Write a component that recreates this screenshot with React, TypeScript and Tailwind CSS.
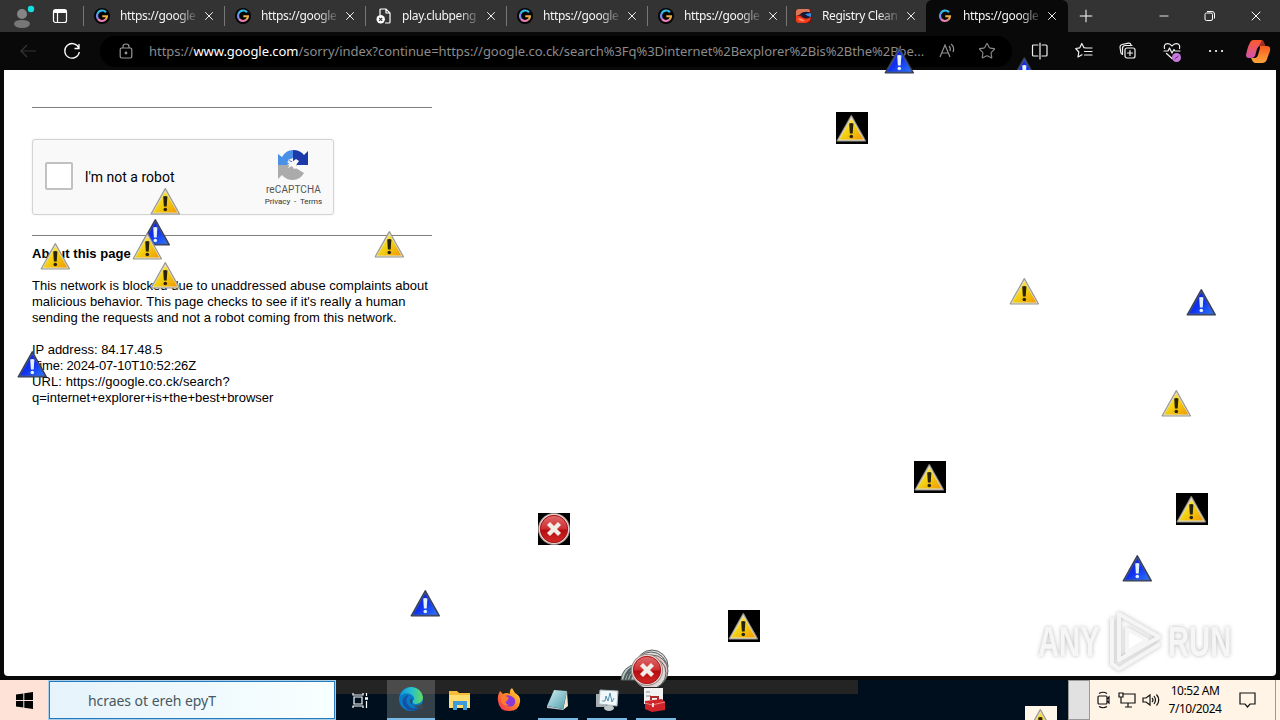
import type { ReactNode } from "react";
import { Minus, Plus, Star, X } from "lucide-react";

type Pin = { x: number; y: number; kind: "yellow" | "blue"; boxed?: boolean; h?: number };

const pins: Pin[] = [
  { x: 139, y: 216, kind: "blue" },
  { x: 149, y: 185, kind: "yellow" },
  { x: 131, y: 230, kind: "yellow" },
  { x: 373, y: 228, kind: "yellow" },
  { x: 39, y: 240, kind: "yellow" },
  { x: 149, y: 259, kind: "yellow" },
  { x: 16, y: 348, kind: "blue" },
  { x: 409, y: 587, kind: "blue" },
  { x: 883, y: 44, kind: "blue" },
  { x: 1008, y: 54, kind: "blue", h: 16 },
  { x: 836, y: 112, kind: "yellow", boxed: true },
  { x: 1008, y: 275, kind: "yellow" },
  { x: 1185, y: 286, kind: "blue" },
  { x: 1160, y: 387, kind: "yellow" },
  { x: 914, y: 461, kind: "yellow", boxed: true },
  { x: 1176, y: 493, kind: "yellow", boxed: true },
  { x: 1121, y: 552, kind: "blue" },
  { x: 728, y: 610, kind: "yellow", boxed: true },
];

const tabs = [
  { title: "https://google", icon: "google" },
  { title: "https://google", icon: "google" },
  { title: "play.clubpeng", icon: "file" },
  { title: "https://google", icon: "google" },
  { title: "https://google", icon: "google" },
  { title: "Registry Clean", icon: "registry" },
  { title: "https://google", icon: "google", active: true },
];

export default function App() {
  return (
    <div className="relative flex h-[720px] w-[1280px] flex-col overflow-hidden bg-[#090909] font-['Noto_Sans',sans-serif]">
      <Defs />
      <TabBar />
      <Toolbar />
      <main className="mx-1 h-[606px] rounded-b bg-white pl-7 pt-[37px] font-['Liberation_Sans',sans-serif] text-black">
        <Captcha />
      </main>
      <div className="h-1 shrink-0 bg-[#090909]" />
      <Taskbar />
      <Watermark />
      {pins.map((pin) => (
        <div
          key={`${pin.x}-${pin.y}`}
          className={`absolute w-8 overflow-hidden ${pin.boxed ? "bg-black" : ""}`}
          style={{ left: pin.x, top: pin.y, height: pin.h ?? 32 }}
        >
          <Triangle kind={pin.kind} shift={pin.boxed ? -0.5 : 0.5} />
        </div>
      ))}
      <div className="absolute left-[538px] top-[513px] size-8 bg-black">
        <ErrorIcon />
      </div>
      <ErrorTrail />
      <div className="absolute left-[1025px] top-[706px] h-[14px] w-8 overflow-hidden bg-[#fff6ea]">
        <Triangle kind="yellow" shift={-0.5} />
      </div>
    </div>
  );
}

function Defs() {
  return (
    <svg className="absolute size-0">
      <defs>
        <linearGradient id="yellow" x1="0" y1="0" x2="1" y2="1">
          <stop offset="0" stopColor="#fff36a" />
          <stop offset=".5" stopColor="#f3d010" />
          <stop offset="1" stopColor="#f29a00" />
        </linearGradient>
        <linearGradient id="blue" x1="0" y1="0" x2="1" y2="1">
          <stop offset="0" stopColor="#1b22c4" />
          <stop offset=".5" stopColor="#1030f0" />
          <stop offset="1" stopColor="#2b73ff" />
        </linearGradient>
        <linearGradient id="red" x1="0" y1="0" x2="0" y2="1">
          <stop offset="0" stopColor="#df6b6b" />
          <stop offset=".48" stopColor="#cf3034" />
          <stop offset=".55" stopColor="#b50c12" />
          <stop offset="1" stopColor="#d42b28" />
        </linearGradient>
        <linearGradient id="edge" x1="0" y1="0" x2="1" y2="0">
          <stop offset="0" stopColor="#1596d8" />
          <stop offset=".5" stopColor="#28bfcf" />
          <stop offset="1" stopColor="#65dc58" />
        </linearGradient>
        <linearGradient id="pad" x1="0" y1="0" x2="1" y2="1">
          <stop offset="0" stopColor="#d2f0f2" />
          <stop offset="1" stopColor="#4e9dad" />
        </linearGradient>
        <linearGradient id="fox" x1="1" y1="0" x2="0" y2="1">
          <stop offset="0" stopColor="#ffe445" />
          <stop offset=".45" stopColor="#ff8b22" />
          <stop offset="1" stopColor="#ef245f" />
        </linearGradient>
        <linearGradient id="copilotA" x1="0" y1="0" x2="0" y2="1">
          <stop offset="0" stopColor="#ff5a28" />
          <stop offset="1" stopColor="#d154b2" />
        </linearGradient>
        <linearGradient id="copilotB" x1="0" y1="0" x2="0" y2="1">
          <stop offset="0" stopColor="#f45b1f" />
          <stop offset="1" stopColor="#ffa53c" />
        </linearGradient>
      </defs>
    </svg>
  );
}

function Triangle({ kind, shift }: { kind: "yellow" | "blue"; shift: number }) {
  const blue = kind === "blue";
  return (
    <svg width="32" height="32" viewBox="0 0 32 32">
      <g transform={`translate(${shift} 0)`}>
        <path
          d="M15 3.8Q15.8 2.4 16.6 3.8L30.3 28.2Q30.9 29.4 29.6 29.4H2Q.7 29.4 1.3 28.2Z"
          fill={blue ? "#343a50" : "#99968a"}
        />
        <path d="M15.8 4.8L29.1 28.4H2.5Z" fill={blue ? "#43598c" : "#e4dfcc"} />
        <path d="M15.8 6.6L27.8 27.4H3.8Z" fill={blue ? "url(#blue)" : "url(#yellow)"} />
        <path d="M13.7 11.6Q15.8 10.6 17.9 11.6L17.2 21.5H14.4Z" fill={blue ? "#e4f1ff" : "#28220b"} />
        <circle cx="15.8" cy="24.5" r="1.8" fill={blue ? "#e4f1ff" : "#28220b"} />
      </g>
    </svg>
  );
}

function ErrorIcon() {
  return (
    <svg width="32" height="32" viewBox="0 0 32 32">
      <circle cx="16" cy="16" r="16" fill="#9d8c89" />
      <circle cx="16" cy="16" r="15" fill="#f2e3e1" />
      <circle cx="16" cy="16" r="13.7" fill="url(#red)" stroke="#a41518" />
      <path d="M10.5 10.5L21.5 21.5M21.5 10.5L10.5 21.5" stroke="#f0eee6" strokeWidth="4.3" />
    </svg>
  );
}

function ErrorTrail() {
  return (
    <div className="absolute left-[620px] top-[646px] h-[41px] w-[52px] overflow-hidden">
      <svg className="absolute left-0 top-0" width="52" height="42" viewBox="0 0 52 42">
        <g stroke="#52605f" strokeWidth="1">
          <path d="M1 34Q2 21 16 18V34Z" fill="#b5c7c3" />
          <path d="M4 34Q6 23 18 19M7 34Q8 25 19 21M10 34Q11 27 20 23" fill="none" strokeWidth="2" />
          <circle cx="32" cy="20" r="16" fill="#e7dddd" />
          <circle cx="31" cy="22" r="16" fill="#e7dddd" />
          <circle cx="32" cy="25" r="16" fill="#edc7c5" />
          <circle cx="30" cy="27" r="16" fill="#dfd7d5" />
        </g>
      </svg>
      <div className="absolute left-[11px] top-[8px]">
        <ErrorIcon />
      </div>
    </div>
  );
}

function GoogleIcon({ active }: { active?: boolean }) {
  return (
    <svg width="16" height="16" viewBox="0 0 16 16" className="shrink-0">
      {!active && <circle cx="8" cy="8" r="8" fill="#050505" />}
      <path d="M12 4.3A5 5 0 0 0 3.5 5.8" fill="none" stroke="#33b8e8" strokeWidth="2.1" />
      <path d="M3.5 5.8A5 5 0 0 0 4 11" fill="none" stroke="#7788ef" strokeWidth="2.1" />
      <path d="M4 11A5 5 0 0 0 11.5 11.6" fill="none" stroke="#ed80b2" strokeWidth="2.1" />
      <path d="M11.5 11.6Q13 10 13 8.2H8.3" fill="none" stroke="#efad45" strokeWidth="2.1" />
    </svg>
  );
}

function TabIcon({ icon, active }: { icon: string; active?: boolean }) {
  if (icon === "file") {
    return (
      <svg width="16" height="16" viewBox="0 0 16 16" className="shrink-0" fill="none" stroke="#fff" strokeWidth="1.2">
        <path d="M4 7V2Q4 1 5 1H10L14 5V14Q14 15 13 15H9M10 1V5H14" />
        <circle cx="4.7" cy="11.3" r="4.2" fill="#fff" stroke="none" />
        <path d="M3.2 9.8L6.2 12.8M6.2 9.8L3.2 12.8" stroke="#333" />
      </svg>
    );
  }
  if (icon === "registry") {
    return (
      <svg width="16" height="16" viewBox="0 0 16 16" className="shrink-0">
        <rect y="1" width="16" height="14" rx="3" fill="#6d1813" />
        <path d="M0 4Q0 1 3 1H12Q14 1 14 4L5 6L0 8Z" fill="#e07858" />
        <path d="M4 6Q9 2 15 5V9Q11 12 7 9Z" fill="#151a35" />
        <path d="M9 6L15 5V9Q12 9 9 6Z" fill="#3f8bdb" />
        <path d="M0 8Q4 7 7 10Q11 12 15 9Q14 15 8 15H3Q0 15 0 12Z" fill="#f43c1c" />
        <path d="M2 10Q6 10 9 13Q6 14 3 12Z" fill="#ff8b68" />
      </svg>
    );
  }
  return <GoogleIcon active={active} />;
}

function TabBar() {
  return (
    <header className="flex h-8 shrink-0 bg-[#333] text-white">
      <div className="flex w-[83px] items-center">
        <svg width="24" height="26" viewBox="0 0 24 26" className="ml-3 mt-0.5">
          <circle cx="10" cy="10" r="5" fill="#858585" />
          <path d="M2 20Q2 16 10 16T18 20Q17 24 10 24T2 20Z" fill="#777" />
          <circle cx="19" cy="5" r="3.2" fill="#14dfe0" />
        </svg>
        <svg width="16" height="16" viewBox="0 0 16 16" className="ml-4" fill="none" stroke="#fff" strokeWidth="1.2">
          <rect x="1.5" y="1.5" width="13" height="13" rx="2" />
          <path d="M2 3.5H14" strokeWidth="3" />
          <path d="M5.5 4V14" />
        </svg>
      </div>
      {tabs.map((tab, i) => (
        <div
          key={i}
          className={`flex h-8 shrink-0 items-center ${
            tab.active
              ? "w-[142px] rounded-t-md bg-[#090909] pl-[11px]"
              : i === 5
                ? "w-[138px] pl-[9px]"
                : "w-[141px] pl-[11px]"
          }`}
        >
          {!tab.active && <div className={`-ml-[11px] h-5 w-px bg-[#777] ${i === 5 ? "mr-[9px]" : "mr-[10px]"}`} />}
          <TabIcon icon={tab.icon} active={tab.active} />
          <span className="ml-[10px] w-[78px] whitespace-nowrap text-[12px] leading-4 tracking-[-0.36px] text-[#f4f4f4] [mask-image:linear-gradient(to_right,#000_72%,transparent_102%)]">
            {tab.title}
          </span>
          <X className="ml-1 size-[14px] shrink-0" strokeWidth={1.6} />
        </div>
      ))}
      <div className="flex flex-1 items-center pl-[8px]">
        <Plus className="size-5" strokeWidth={1.2} />
        <Minus className="ml-[61px] size-[14px]" strokeWidth={1.5} />
        <svg width="12" height="12" viewBox="0 0 12 12" className="ml-[33px]" fill="none" stroke="#fff">
          <rect x="1" y="3" width="7.5" height="7.5" rx="1.5" />
          <path d="M3 1.5H8Q10.5 1.5 10.5 4V8.5" />
        </svg>
        <X className="ml-[32px] size-[16px]" strokeWidth={1.5} />
      </div>
    </header>
  );
}

function Toolbar() {
  return (
    <nav className="flex h-[38px] shrink-0 items-center bg-[#090909] text-[#f1f1f1]">
      <svg width="18" height="16" viewBox="0 0 18 16" className="ml-[19px] shrink-0" fill="none" stroke="#353535" strokeWidth="1.2">
        <path d="M17 8H2M8 2L2 8L8 14" />
      </svg>
      <svg width="18" height="18" viewBox="0 0 18 18" className="ml-[26px] shrink-0" fill="none" stroke="#fff" strokeWidth="1.3">
        <path d="M16 6.5A7.3 7.3 0 1 0 16.3 10M16 2V6.5H11.5" />
      </svg>
      <div className="ml-[19px] flex h-[31px] w-[912px] shrink-0 items-center rounded-full bg-black">
        <svg width="14" height="16" viewBox="0 0 14 16" className="ml-[19px] shrink-0" fill="none" stroke="#989898" strokeWidth="1.2">
          <rect x="1.2" y="5" width="11.6" height="10" rx="1.5" />
          <path d="M4 5V3.5Q4 1 7 1T10 3.5V5" />
          <circle cx="7" cy="10" r=".8" fill="#aaa" />
        </svg>
        <span className="ml-[16px] w-[778px] shrink-0 whitespace-nowrap text-[13px] leading-5 tracking-[-0.05px] text-[#8b8b8b]">
          https://<span className="text-white">www.google.com</span>/sorry/index?continue=https://google.co.ck/search%3Fq%3Dinternet%2Bexplorer%2Bis%2Bthe%2Bbe...
        </span>
        <svg width="18" height="18" viewBox="0 0 18 18" className="ml-[12px] shrink-0" fill="none" stroke="#929292" strokeWidth="1.2">
          <path d="M1 15L6 3L11 15M3 11H9M10 4Q12 6 11 9M12 2Q16 5 14 10" />
        </svg>
        <Star className="ml-[21px] size-[18px] text-[#8b8b8b]" strokeWidth={1.5} />
      </div>
      <ToolIcon className="ml-[19px]">
        <path d="M7 3H2.5Q1.5 3 1.5 4V13Q1.5 14 2.5 14H7M11 3H15Q16 3 16 4V13Q16 14 15 14H11M9 1V17" />
      </ToolIcon>
      <ToolIcon className="ml-[26px]">
        <path d="M11 6L9 5.7L6.8 1.5L4.8 5.8L.7 6.5L3.8 10L3 15L7 12.7M11 6H17M9.5 9.5H17M9.5 13H17" />
      </ToolIcon>
      <ToolIcon className="ml-[26px]">
        <rect x="6" y="6" width="10" height="10" rx="2" />
        <path d="M11 8.5V13.5M8.5 11H13.5M3.5 12.5Q2 12 1.8 10.5L1 5Q1 3 3 2.5L9.5 1.2Q11.5 1 12 3" />
        <path d="M3.5 12V6.5Q3.5 3.5 6.5 3.5H13" />
      </ToolIcon>
      <div className="relative ml-[26px]">
        <ToolIcon className="block">
          <path d="M1.5 6.5Q.5 2 4.5 1.7Q7 1.5 9 4Q11 1.5 13.5 1.7Q17.5 2 16.5 6.5M1 9H5L6.5 6L9 11L11 7.5L12 9H17M3.5 11.5L9 16.5" />
        </ToolIcon>
        <svg width="9" height="9" viewBox="0 0 9 9" className="absolute -bottom-0.5 right-0">
          <circle cx="4.5" cy="4.5" r="4.5" fill="#c779dd" />
          <path d="M2.5 6L6.5 3" stroke="#642b75" />
        </svg>
      </div>
      <ToolIcon className="ml-[26px]">
        <path d="M3 9H3.1M9 9H9.1M15 9H15.1" strokeWidth="2.2" />
      </ToolIcon>
      <svg width="26" height="25" viewBox="0 0 26 25" className="ml-[20px] shrink-0">
        <path d="M6 2Q7 1 9 1H16Q18 1 19 4L20 7H15Q13 7 12 10L10 17Q9 19 6 19H4Q1 19 1 16Q3 6 6 2Z" fill="url(#copilotA)" />
        <path d="M15 7H22Q26 7 25 12L22 20Q21 24 17 24H10Q8 24 7 21L6 19H10Q12 19 13 16L15 9Z" fill="url(#copilotB)" />
        <path d="M14 7L17 1Q19 2 20 7Z" fill="#9f3020" />
      </svg>
    </nav>
  );
}

function ToolIcon({ className, children }: { className: string; children: ReactNode }) {
  return (
    <svg width="18" height="18" viewBox="0 0 18 18" className={`shrink-0 ${className}`} fill="none" stroke="#f2f2f2" strokeWidth="1.2" strokeLinecap="round" strokeLinejoin="round">
      {children}
    </svg>
  );
}

function Captcha() {
  return (
    <div className="w-[400px] text-[13px] leading-4">
      <div className="h-px bg-[#808080]" />
      <div className="mt-[31px] flex h-[76px] w-[302px] items-center rounded-[3px] border border-[#d3d3d3] bg-[#f9f9f9] shadow-[0_0_3px_rgba(0,0,0,0.08)]">
        <div className="mb-[2px] ml-3 size-7 rounded-[2px] border-2 border-[#c1c1c1] bg-white" />
        <span className="ml-3 w-[171px] font-['Roboto',sans-serif] text-[14px]">I'm not a robot</span>
        <div className="flex w-[80px] flex-col items-center pt-[3px] font-['Roboto',sans-serif] text-[#555]">
          <svg width="32" height="32" viewBox="0 0 32 32">
            <path d="M1 16V5L5 8Q9 1 16 1V9L11 11L13 14L10 16Z" fill="#4a90e6" />
            <path d="M16 1Q23 1 27 6L31 2V16H20L17 18L14 15L12 11L16 13Z" fill="#1c3aa9" />
            <path d="M1 16H12L15 14L17 16L20 15L19 19L22 21L27 24Q23 31 16 31Q9 31 5 26L1 30Z" fill="#ababab" />
            <path d="M12 12L15 13L19 10L22 12L19 16L21 19L17 20L15 17L11 19L13 15L10 13Z" fill="#f9f9f9" />
          </svg>
          <span className="mt-[2px] text-[10px] leading-[13px] tracking-[0.1px]">reCAPTCHA</span>
          <span className="text-[8px] leading-[12px] tracking-[-0.05px] text-[#333]">Privacy&nbsp; -&nbsp; Terms</span>
        </div>
      </div>
      <div className="mt-5 h-px bg-[#808080]" />
      <p className="mt-[10px] font-bold tracking-[0.03px]">About this page</p>
      <p className="mt-4 whitespace-nowrap tracking-[0.02px]">
        This network is blocked due to unaddressed abuse complaints about
        <br />
        malicious behavior. This page checks to see if it's really a human
        <br />
        sending the requests and not a robot coming from this network.
      </p>
      <p className="mt-4 whitespace-nowrap">
        IP address: 84.17.48.5
        <br />
        <span className="tracking-[-0.18px]">Time: 2024-07-10T10:52:26Z</span>
        <br />
        <span className="tracking-[0.08px]">URL: https://google.co.ck/search?</span>
        <br />
        q=internet+explorer+is+the+best+browser
      </p>
    </div>
  );
}

function Taskbar() {
  return (
    <footer className="flex h-10 shrink-0 bg-[#000f1d]">
      <div className="flex w-12 items-center justify-center bg-[#ffe2d7]">
        <svg width="17" height="17" viewBox="0 0 17 17" fill="#000">
          <path d="M0 2.5L7.3 1.4V8H0ZM8.3 1.2L17 0V8H8.3ZM0 9H7.3V15.6L0 14.5ZM8.3 9H17V17L8.3 15.8Z" />
        </svg>
      </div>
      <div className="flex w-72 items-center border border-[#a7ceea] bg-gradient-to-r from-[#e6f3fb] to-[#f8ffff]">
        <div className="flex h-[38px] w-[286px] items-center border border-[#2879b9] pl-[38px] text-[14px] tracking-[-0.05px] text-[#475860]">
          hcraes ot ereh epyT
        </div>
      </div>
      <div className="flex w-[522px] bg-[linear-gradient(#242424_14px,#000f1d_14px)]">
        <div className="flex w-[51px] items-center justify-center pr-[3px]">
          <svg width="17" height="17" viewBox="0 0 17 17" fill="none" stroke="#fff" strokeWidth="1.2">
            <path d="M1 1V3H11V1M1 16V14H11V16M2 5H10V12H2ZM14.5 1V4M14.5 9V16" />
            <path d="M13 6.5H16" strokeWidth="2.5" />
          </svg>
        </div>
        <div className="flex w-12 items-center justify-center border-b-2 border-[#79b9e5] bg-[linear-gradient(#4b4b4b_14px,#354149_14px)]">
          <svg width="24" height="24" viewBox="0 0 24 24">
            <circle cx="12" cy="12" r="12" fill="#087bc8" />
            <path d="M1 9Q4 0 13 0Q22 1 24 10Q24 16 17 17Q13 17 14 14Q17 11 13 8Q7 4 1 9Z" fill="url(#edge)" />
            <path d="M10 8Q4 14 11 20Q16 23 22 18Q18 26 9 23Q2 18 4 12Q6 8 10 8Z" fill="#1652a2" />
            <path d="M13 11Q9 14 13 18Q18 20 22 17L24 18V22Q15 20 13 18Z" fill="#3d4a52" />
          </svg>
        </div>
        <TaskItem>
          <path d="M1 3H9L11 5H22V20H1Z" fill="#f6bd35" />
          <path d="M1 7H22V20H1Z" fill="#ffdc70" />
          <path d="M5 13H19V22H15V17H9V22H5Z" fill="#3f9bd8" />
        </TaskItem>
        <TaskItem>
          <path d="M3 3L6 6Q9 4 13 6Q12 2 15 0L18 5Q24 8 23 14Q22 23 12 23Q2 23 1 13Q0 8 3 3Z" fill="url(#fox)" />
          <path d="M8 8Q13 6 17 10Q20 14 16 18Q9 20 7 14Q9 14 11 12Z" fill="#8a36d8" />
          <path d="M4 8Q9 7 12 10L9 13Q8 16 12 17Q8 19 4 14Z" fill="#ff7a2e" />
        </TaskItem>
        <TaskItem open>
          <path d="M8 2L21 3L17 21L1 18Z" fill="url(#pad)" />
          <path d="M21 3L22 18L17 22Z" fill="#eee8d1" />
          <path d="M1 18L17 21V22L1 20Z" fill="#b5c5c4" />
        </TaskItem>
        <TaskItem open>
          <rect x="1" y="6" width="10" height="13" fill="#a8acae" />
          <path d="M5 2L23 3L22 18L4 16Z" fill="#f2f7f9" stroke="#a8b7bd" />
          <path d="M7 13H10L11 8L13 13L15 5L17 14L19 10" fill="none" stroke="#4e91b2" />
          <ellipse cx="14" cy="20" rx="5" ry="3" fill="#c2c7ca" />
        </TaskItem>
        <TaskItem open>
          <rect x="0" y="0" width="19" height="16" fill="#f2f2f2" />
          <path d="M2 4H6M2 8H7" stroke="#888" />
          <path d="M7 12V9H14V13" fill="none" stroke="#ad2b2d" strokeWidth="2" />
          <path d="M1 13L18 11L21 14V22L8 24L1 21Z" fill="#cf2429" />
          <path d="M1 15L8 17L21 14" fill="none" stroke="#ed8784" />
          <path d="M9 15V19" stroke="#ddd" strokeWidth="2" />
        </TaskItem>
      </div>
      <div className="w-[210px]" />
      <div className="w-[22px] border border-[#999] bg-[#e1e1e1]" />
      <div className="flex flex-1 items-center bg-[#fff4e6] text-black">
        <TrayIcon className="ml-[6px]">
          <rect x="2" y="5" width="9" height="8" rx="1" />
          <path d="M11 8L13 6V12L11 10M3 2.5Q7 0 11 2.5M3 15.5Q7 18 11 15.5" />
        </TrayIcon>
        <TrayIcon className="ml-1">
          <path d="M5 3H17V12H3V8M7 16H14M10 12V16M1 2H5V6H1ZM3 6V9" />
        </TrayIcon>
        <TrayIcon className="ml-1.5">
          <path d="M1 7H4L8 4V14L4 11H1ZM10 7Q12 9 10 11M12 5Q15 9 12 13M14.5 3.5Q19 9 14.5 14.5" />
        </TrayIcon>
        <div className="ml-[4px] w-[62px] whitespace-nowrap text-center text-[12px] leading-[18px] tracking-[-0.45px]">
          <div>10:52 AM</div>
          <div>7/10/2024</div>
        </div>
        <TrayIcon className="ml-[13px]">
          <path d="M1 2H16V13H11L8.5 16L6 13H1Z" />
        </TrayIcon>
        <div className="ml-auto mr-1 h-10 w-px bg-[#999]" />
      </div>
    </footer>
  );
}

function TaskItem({ open, children }: { open?: boolean; children: ReactNode }) {
  return (
    <div className="relative flex w-[49px] items-center justify-center">
      <svg width="24" height="24" viewBox="0 0 24 24">
        {children}
      </svg>
      {open && <div className="absolute bottom-0 h-0.5 w-10 bg-[#79b9e5]" />}
    </div>
  );
}

function TrayIcon({ className, children }: { className: string; children: ReactNode }) {
  return (
    <svg width="18" height="18" viewBox="0 0 18 18" className={`shrink-0 ${className}`} fill="none" stroke="#111" strokeWidth="1.2">
      {children}
    </svg>
  );
}

function Watermark() {
  return (
    <div className="absolute left-[1038px] top-[608px] flex h-[66px] w-[198px] items-center font-['Liberation_Sans',sans-serif] text-[43px] font-bold text-[#f6f6f6] [filter:drop-shadow(0_0_2px_#bbb)]">
      <span className="w-[68px] origin-left scale-x-[.68]">ANY</span>
      <svg width="58" height="64" viewBox="0 0 58 64" fill="none" stroke="#f5f5f5" strokeWidth="4" strokeLinejoin="round">
        <path d="M13 5L53 28L13 51Z" />
        <path d="M21 20L41 31L21 43Z" fill="#fff" />
        <path d="M6 9V55L13 60L54 35" />
      </svg>
      <span className="ml-[4px] w-[66px] origin-left scale-x-[.68]">RUN</span>
    </div>
  );
}
